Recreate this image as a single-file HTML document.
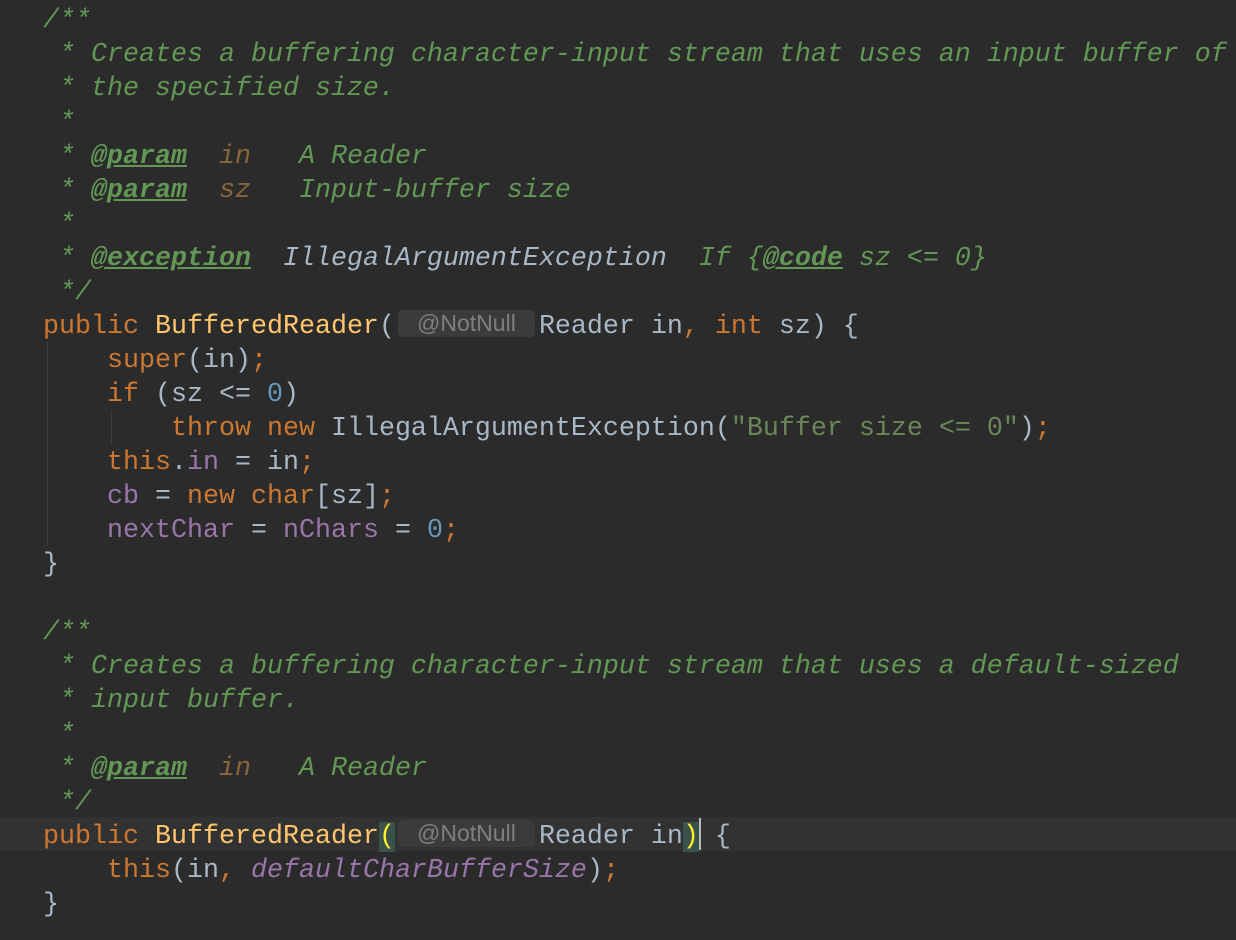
<!DOCTYPE html><html><head><style>
body{margin:0;background:#2b2b2b;width:1236px;height:940px;overflow:hidden;position:relative}
.c{position:absolute;left:43px;top:4px;font-family:"Liberation Mono",monospace;font-size:26.67px;line-height:34px;color:#a9b7c6}
.l{height:34px;position:relative;white-space:pre}
.cur{position:absolute;left:0;top:817px;width:1236px;height:34px;background:#323232}
.k{color:#cc7832}.m{color:#ffc66d}.n{color:#6897bb}.s{color:#6a8759}.f{color:#9876aa}.fi{color:#9876aa;font-style:italic}
.d{color:#629755;font-style:italic}.t{color:#629755;font-style:italic;font-weight:bold;text-decoration:underline}
.p{color:#8a653b;font-style:italic}.g{color:#a9b7c6;font-style:italic}
.h{display:inline-block;width:137px;margin:0 4px 0 3px;background:#3b3b3b;color:#7f7f7f;font-family:"Liberation Sans",sans-serif;font-size:23px;line-height:27px;border-radius:5px;text-align:center;vertical-align:2px}
.b{background:#3b514d;color:#ffef28}
.guide{position:absolute;width:1px;background:#3d3d3d}
.cursor{position:absolute;left:699px;top:818px;width:2px;height:32px;background:#bbbbbb}
</style></head><body>
<div class="cur"></div>
<div class="guide" style="left:47px;top:342px;height:204px"></div>
<div class="guide" style="left:111px;top:410px;height:34px"></div>
<div class="c"><div class="l"><span class="d">/**</span></div><div class="l"><span class="d"> * Creates a buffering character-input stream that uses an input buffer of</span></div><div class="l"><span class="d"> * the specified size.</span></div><div class="l"><span class="d"> *</span></div><div class="l"><span class="d"> * </span><span class="t">@param</span><span class="d">  </span><span class="p">in</span><span class="d">   A Reader</span></div><div class="l"><span class="d"> * </span><span class="t">@param</span><span class="d">  </span><span class="p">sz</span><span class="d">   Input-buffer size</span></div><div class="l"><span class="d"> *</span></div><div class="l"><span class="d"> * </span><span class="t">@exception</span><span class="d">  </span><span class="g">IllegalArgumentException</span><span class="d">  If {</span><span class="t">@code</span><span class="d"> sz &lt;= 0}</span></div><div class="l"><span class="d"> */</span></div><div class="l"><span class="k">public </span><span class="m">BufferedReader</span>(<span class="h">@NotNull</span>Reader in<span class="k">, int </span>sz) {</div><div class="l">    <span class="k">super</span>(in)<span class="k">;</span></div><div class="l">    <span class="k">if </span>(sz &lt;= <span class="n">0</span>)</div><div class="l">        <span class="k">throw new </span>IllegalArgumentException(<span class="s">"Buffer size &lt;= 0"</span>)<span class="k">;</span></div><div class="l">    <span class="k">this</span>.<span class="f">in</span> = in<span class="k">;</span></div><div class="l">    <span class="f">cb</span> = <span class="k">new char</span>[sz]<span class="k">;</span></div><div class="l">    <span class="f">nextChar</span> = <span class="f">nChars</span> = <span class="n">0</span><span class="k">;</span></div><div class="l">}</div><div class="l"> </div><div class="l"><span class="d">/**</span></div><div class="l"><span class="d"> * Creates a buffering character-input stream that uses a default-sized</span></div><div class="l"><span class="d"> * input buffer.</span></div><div class="l"><span class="d"> *</span></div><div class="l"><span class="d"> * </span><span class="t">@param</span><span class="d">  </span><span class="p">in</span><span class="d">   A Reader</span></div><div class="l"><span class="d"> */</span></div><div class="l"><span class="k">public </span><span class="m">BufferedReader</span><span class="b">(</span><span class="h">@NotNull</span>Reader in<span class="b">)</span> {</div><div class="l">    <span class="k">this</span>(in<span class="k">, </span><span class="fi">defaultCharBufferSize</span>)<span class="k">;</span></div><div class="l">}</div></div>
<div class="cursor"></div>
</body></html>
